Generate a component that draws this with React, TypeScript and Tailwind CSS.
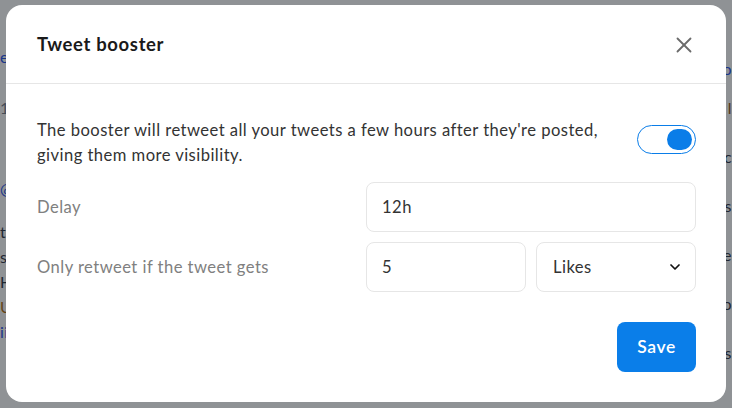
import React, { useState } from 'react';
import { X, ChevronDown } from 'lucide-react';

const leftBits = [
  { t: 'e', c: 'text-blue-700', y: 'mt-[46px]' },
  { t: '1', c: 'text-gray-500', y: 'mt-[30px]' },
  { t: '@', c: 'text-blue-700', y: 'mt-[60px]' },
  { t: 'tc', c: 'text-gray-800', y: 'mt-[22px]' },
  { t: 'sh', c: 'text-gray-800', y: 'mt-[4px]' },
  { t: 'Ho', c: 'text-gray-800', y: 'mt-[4px]' },
  { t: 'Us', c: 'text-yellow-700', y: 'mt-[4px]' },
  { t: 'ii', c: 'text-blue-700', y: 'mt-[4px]' },
];

const rightBits = [
  { t: 'o', c: 'text-blue-700', y: 'mt-[58px]' },
  { t: 'l', c: 'text-yellow-800', y: 'mt-[18px]' },
  { t: 'c', c: 'text-gray-800', y: 'mt-[28px]' },
  { t: 's', c: 'text-gray-800', y: 'mt-[28px]' },
  { t: 'e', c: 'text-gray-800', y: 'mt-[28px]' },
  { t: 'fo', c: 'text-gray-800', y: 'mt-[28px]' },
  { t: 's', c: 'text-gray-800', y: 'mt-[28px]' },
];

const Toggle: React.FC<{ on: boolean; onChange: (v: boolean) => void }> = ({ on, onChange }) => (
  <button
    onClick={() => onChange(!on)}
    className={`w-[59px] h-[29px] rounded-full border border-[#0a7de8] bg-white flex items-center px-[3px] ${
      on ? 'justify-end' : 'justify-start'
    }`}
  >
    <span className="w-[25px] h-[21px] rounded-full bg-[#0a7de8]" />
  </button>
);

const App: React.FC = () => {
  const [enabled, setEnabled] = useState(true);
  const [delay, setDelay] = useState('12h');
  const [count, setCount] = useState('5');
  const [metric, setMetric] = useState('Likes');

  return (
    <div className="relative w-[732px] h-[408px] overflow-hidden bg-white font-['Lato',sans-serif] tracking-[0.45px]">
      {/* page behind the modal */}
      <div className="flex justify-between h-full text-[16px]">
        <div className="flex flex-col w-[20px] leading-[21px]">
          {leftBits.map((b, i) => (
            <span key={i} className={`${b.c} ${b.y} whitespace-nowrap`}>{b.t}</span>
          ))}
        </div>
        <div className="flex flex-col w-[14px] items-end leading-[21px]">
          {rightBits.map((b, i) => (
            <span key={i} className={`${b.c} ${b.y} whitespace-nowrap`}>{b.t}</span>
          ))}
        </div>
      </div>

      {/* overlay */}
      <div className="absolute inset-0 bg-[#1f262b]/50 flex items-start justify-center pt-[5px]">
        <div className="w-[720px] h-[397px] bg-white rounded-[16px] flex flex-col">
          <div className="h-[79px] flex items-center justify-between pl-[31px] pr-[29px] border-b border-[#e6e6e6]">
            <h2 className="text-[18.5px] font-bold text-[#1a1a1a] tracking-[0.65px] mt-[2px]">Tweet booster</h2>
            <button className="text-[#6b6b6b] mt-[2px]">
              <X size={26} strokeWidth={1.7} />
            </button>
          </div>

          <div className="flex flex-col px-[30px] pt-[34px]">
            <div className="flex items-start justify-between pl-[1px]">
              <p className="text-[16.6px] leading-[25px] text-[#333333] w-[580px]">
                The booster will retweet all your tweets a few hours after they're posted, giving them more visibility.
              </p>
              <div className="mt-[7px]">
                <Toggle on={enabled} onChange={setEnabled} />
              </div>
            </div>

            <div className="grid grid-cols-[330px_1fr] gap-y-[10px] mt-[14px]">
              <label className="flex items-center text-[16.6px] text-[#808080] pl-[1px]">Delay</label>
              <input
                value={delay}
                onChange={(e) => setDelay(e.target.value)}
                className="h-[50px] rounded-[8px] border border-[#e6e6e6] px-[15px] text-[16.6px] text-[#333333] outline-none"
              />
              <label className="flex items-center text-[16.6px] text-[#808080] pl-[1px]">Only retweet if the tweet gets</label>
              <div className="grid grid-cols-2 gap-[10px]">
                <input
                  value={count}
                  onChange={(e) => setCount(e.target.value)}
                  className="h-[50px] w-full rounded-[8px] border border-[#e6e6e6] px-[15px] text-[16.6px] text-[#333333] outline-none"
                />
                <div className="relative h-[50px]">
                  <select
                    value={metric}
                    onChange={(e) => setMetric(e.target.value)}
                    className="appearance-none h-full w-full rounded-[8px] border border-[#e6e6e6] bg-white pl-[16px] text-[16.6px] text-[#333333] outline-none"
                  >
                    <option>Likes</option>
                    <option>Retweets</option>
                    <option>Replies</option>
                  </select>
                  <ChevronDown
                    size={16}
                    strokeWidth={2.6}
                    className="absolute right-[13px] top-[17px] text-[#111] pointer-events-none"
                  />
                </div>
              </div>
            </div>

            <div className="flex justify-end mt-[30px]">
              <button className="h-[50px] w-[79px] rounded-[8px] bg-[#0a7ee9] text-white text-[17.5px] font-semibold tracking-[0.6px]">
                Save
              </button>
            </div>
          </div>
        </div>
      </div>
    </div>
  );
};

export default App;
